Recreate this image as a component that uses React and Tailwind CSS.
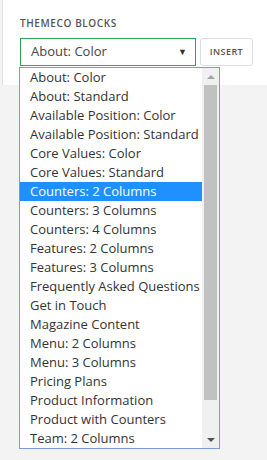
import React from 'react';

const options = [
  'About: Color',
  'About: Standard',
  'Available Position: Color',
  'Available Position: Standard',
  'Core Values: Color',
  'Core Values: Standard',
  'Counters: 2 Columns',
  'Counters: 3 Columns',
  'Counters: 4 Columns',
  'Features: 2 Columns',
  'Features: 3 Columns',
  'Frequently Asked Questions',
  'Get in Touch',
  'Magazine Content',
  'Menu: 2 Columns',
  'Menu: 3 Columns',
  'Pricing Plans',
  'Product Information',
  'Product with Counters',
  'Team: 2 Columns',
];

const App = () => {
  const selected = 'Counters: 2 Columns';

  return (
    <div className="w-[267px] h-[460px] bg-[#f3f3f3] font-['Open_Sans',sans-serif] text-[#333] relative overflow-hidden">
      {/* panel */}
      <div className="bg-white h-[85px] ml-[2px] border-l border-[#e2e2e2] pl-[17px] pt-[16px]">
        <div className="text-[10px] font-semibold tracking-[0.06em] text-[#555] leading-[14px]">THEMECO BLOCKS</div>
        <div className="flex gap-[4px] mt-[8px]">
          <div className="w-[176px] h-[28px] border border-[#2ea55a] bg-white flex items-center justify-between pl-[10px] pr-[8px] text-[13px] text-[#444]">
            <span>About: Color</span>
            <span className="text-[9px] text-[#333]">▼</span>
          </div>
          <div className="w-[53px] h-[28px] border border-[#ddd] rounded-[3px] bg-white flex items-center justify-center text-[9px] font-semibold tracking-[0.05em] text-[#555]">
            INSERT
          </div>
        </div>
      </div>

      {/* dropdown list */}
      <div className="absolute left-[19px] top-[67px] w-[201px] h-[382px] border border-[#7b9bd6] bg-white flex">
        <div className="flex-1">
          {options.map((o) => (
            <div
              key={o}
              className={`h-[19px] leading-[19px] pl-[10px] text-[13px] whitespace-nowrap ${
                o === selected ? 'bg-[#1e90ff] text-white' : 'text-[#333]'
              }`}
            >
              {o}
            </div>
          ))}
        </div>
        <div className="w-[17px] bg-[#f0f0f0] flex flex-col items-center">
          <div className="h-[17px] flex items-center justify-center">
            <div className="w-0 h-0 border-l-[4px] border-r-[4px] border-b-[4px] border-l-transparent border-r-transparent border-b-[#a3a3a3]" />
          </div>
          <div className="w-[13px] h-[315px] bg-[#c1c1c1]" />
          <div className="flex-1" />
          <div className="h-[17px] flex items-center justify-center">
            <div className="w-0 h-0 border-l-[4px] border-r-[4px] border-t-[4px] border-l-transparent border-r-transparent border-t-[#505050]" />
          </div>
        </div>
      </div>
    </div>
  );
};

export default App;
